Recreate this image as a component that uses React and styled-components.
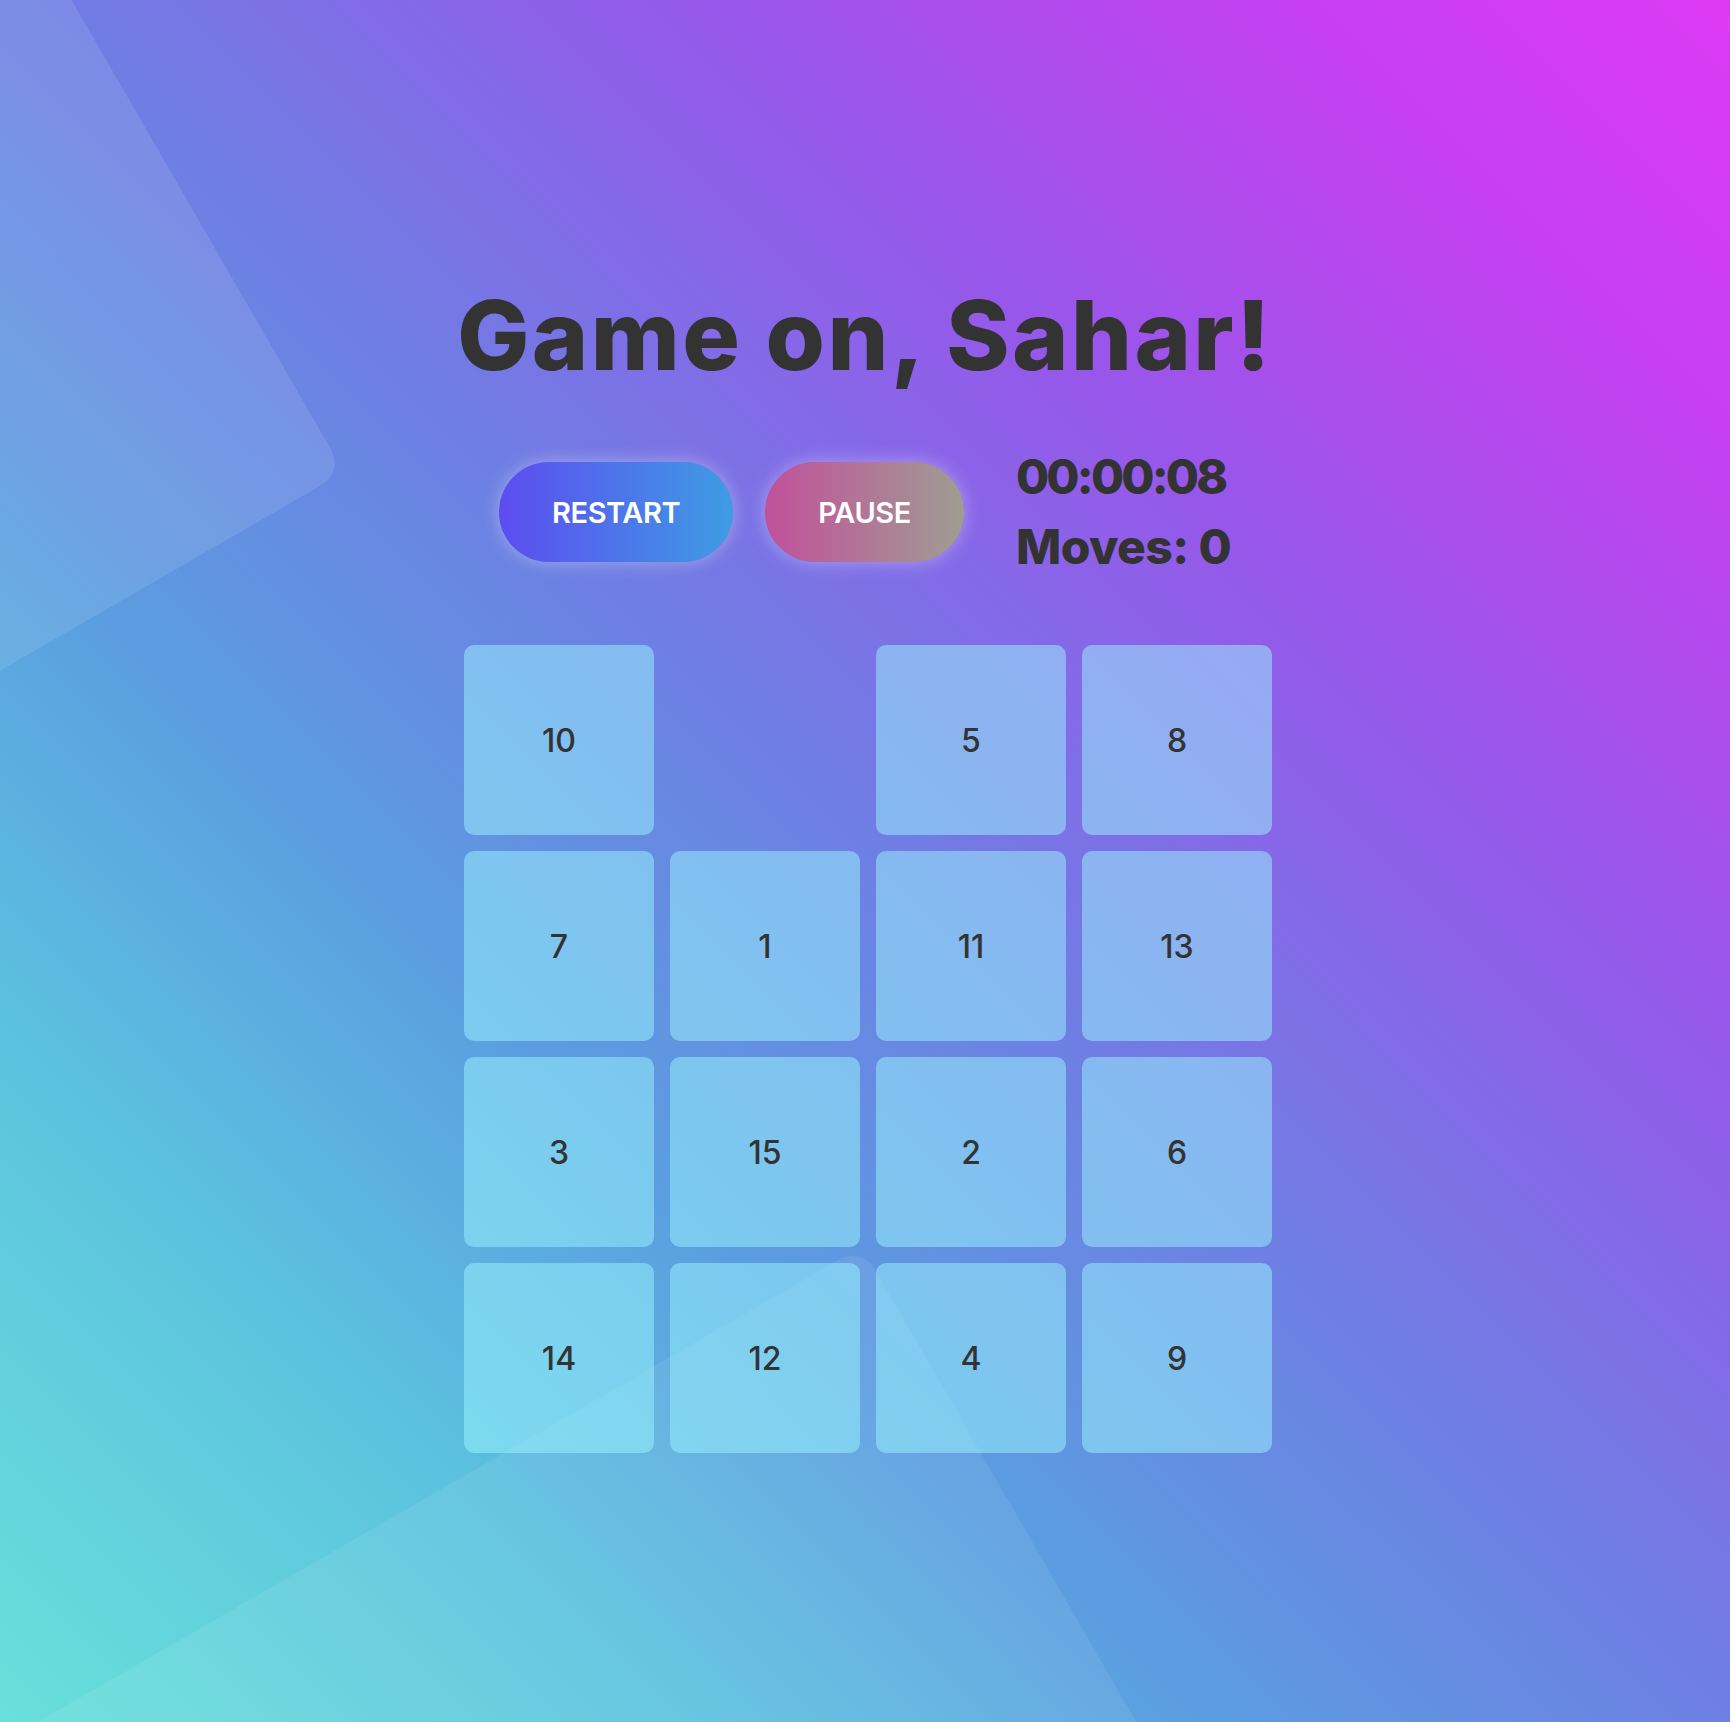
import React from "react";
import styled, { createGlobalStyle } from "styled-components";

const GlobalStyle = createGlobalStyle`
  html, body {
    margin: 0;
    padding: 0;
  }
  body {
    font-family: "Inter", "Noto Sans", "Liberation Sans", sans-serif;
    color: #333333;
  }
  * { box-sizing: border-box; }
`;

const Page = styled.main`
  position: relative;
  min-height: 100vh;
  overflow: hidden;
  display: flex;
  flex-direction: column;
  align-items: center;
  padding-top: 287px;
  background: linear-gradient(
    45deg,
    #68e0da 0%,
    #5cc2df 20%,
    #5b9de0 35%,
    #6d80e3 50%,
    #9658ea 70%,
    #c440f0 87%,
    #de3af4 100%
  );
`;

const Decor = styled.div`
  position: absolute;
  width: ${(p) => p.$size}px;
  height: ${(p) => p.$size}px;
  left: ${(p) => p.$left}px;
  top: ${(p) => p.$top}px;
  border-radius: 26px;
  background: rgba(255, 255, 255, ${(p) => p.$alpha});
  transform: rotate(60deg);
  pointer-events: none;
`;

const Content = styled.div`
  position: relative;
  z-index: 1;
  display: flex;
  flex-direction: column;
  align-items: center;
`;

const Title = styled.h1`
  margin: 0;
  font-size: 96px;
  line-height: 1;
  font-weight: 800;
  letter-spacing: 2.4px;
  color: #333333;
`;

const Controls = styled.div`
  display: flex;
  align-items: center;
  gap: 32px;
  margin-top: 59px;
`;

const PillButton = styled.button`
  height: 100px;
  padding: 0 53px;
  border: none;
  border-radius: 50px;
  font-family: inherit;
  font-size: 29px;
  font-weight: 600;
  letter-spacing: -0.4px;
  color: #ffffff;
  cursor: pointer;
  box-shadow: 0 0 18px rgba(255, 255, 255, 0.35);
  background: ${(p) =>
    p.$variant === "pause"
      ? "linear-gradient(90deg, #c2509b 0%, #9f9d93 100%)"
      : "linear-gradient(90deg, #5d4cef 0%, #3e9ce4 100%)"};
`;

const Stats = styled.div`
  display: flex;
  flex-direction: column;
  margin-left: 20px;
`;

const StatLine = styled.div`
  font-size: 48px;
  line-height: 70px;
  font-weight: 800;
  letter-spacing: ${(p) => p.$spacing}px;
  color: #333333;
`;

const Board = styled.div`
  display: grid;
  grid-template-columns: repeat(4, 190px);
  grid-auto-rows: 190px;
  gap: 16px;
  margin-top: 63px;
  margin-left: 6px;
`;

const Tile = styled.div`
  display: flex;
  align-items: center;
  justify-content: center;
  border-radius: 10px;
  font-size: 32px;
  font-weight: 500;
  color: #333333;
  background: ${(p) => (p.$empty ? "transparent" : "rgba(155, 246, 253, 0.5)")};
`;

const tiles = [10, null, 5, 8, 7, 1, 11, 13, 3, 15, 2, 6, 14, 12, 4, 9];

export default function App() {
  return (
    <>
      <GlobalStyle />
      <Page>
        <Decor $size={700} $left={-484} $top={-6} $alpha={0.1} />
        <Decor $size={1200} $left={42} $top={1466} $alpha={0.08} />
        <Content>
          <Title>Game on, Sahar!</Title>
          <Controls>
            <PillButton>RESTART</PillButton>
            <PillButton $variant="pause">PAUSE</PillButton>
            <Stats>
              <StatLine $spacing={-2.8}>00:00:08</StatLine>
              <StatLine $spacing={-0.6}>Moves: 0</StatLine>
            </Stats>
          </Controls>
          <Board>
            {tiles.map((n, i) => (
              <Tile key={i} $empty={n === null}>
                {n}
              </Tile>
            ))}
          </Board>
        </Content>
      </Page>
    </>
  );
}
